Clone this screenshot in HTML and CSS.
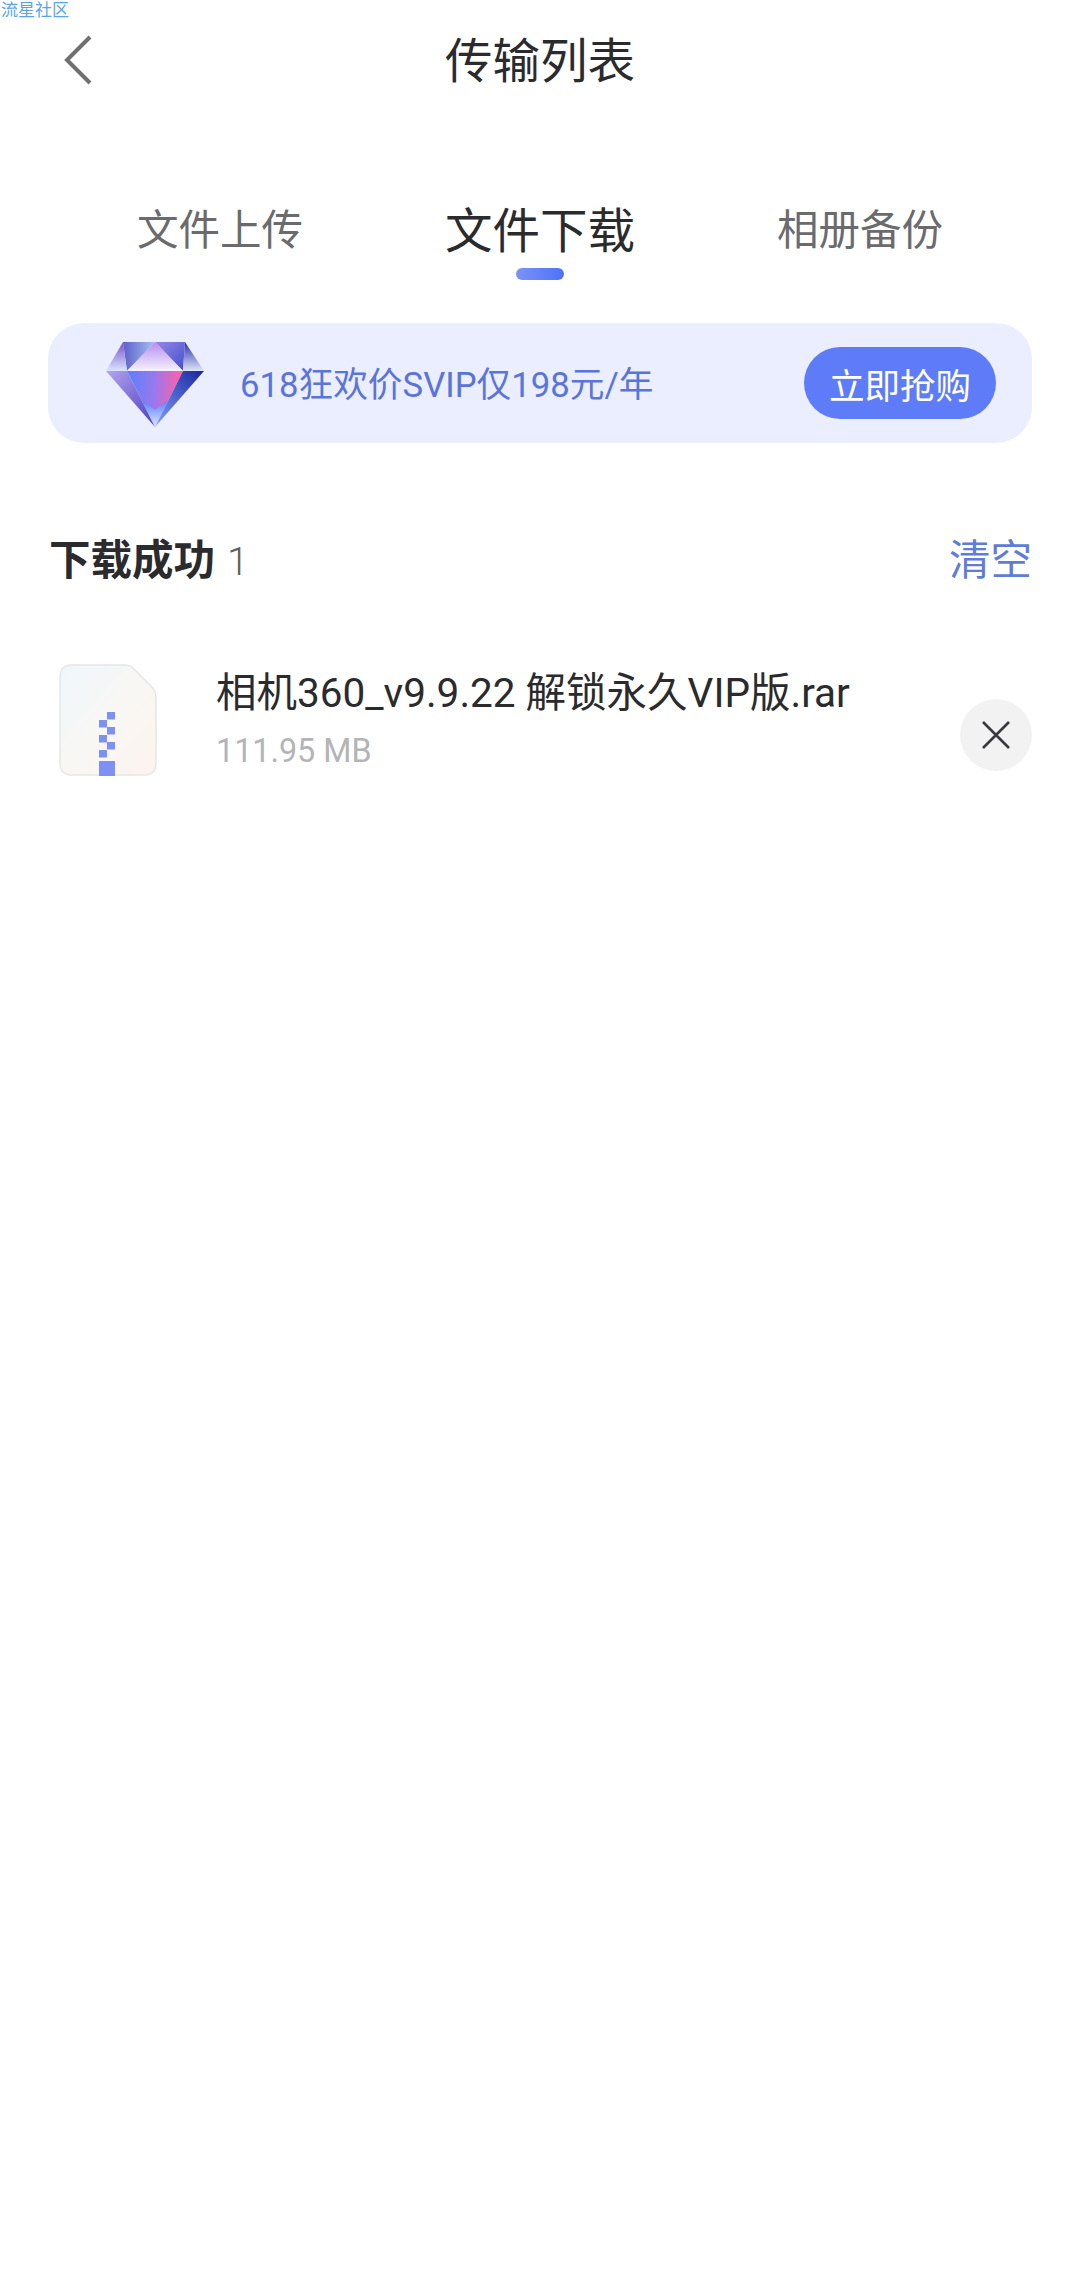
FILE: index.html
```html
<!DOCTYPE html>
<html lang="zh-CN">
<head>
    <meta charset="UTF-8">
    <title>传输列表</title>
    <link rel="stylesheet" href="styles.css">
</head>
<body>
    <div class="watermark">流星社区</div>
    <header class="topbar">
        <svg class="back" width="34" height="52" viewBox="0 0 34 52">
            <path d="M29 3 L6 26 L29 49" fill="none" stroke="#707070" stroke-width="4"/>
        </svg>
        <h1>传输列表</h1>
    </header>
    <nav class="tabs">
        <div class="tab">文件上传</div>
        <div class="tab active">文件下载</div>
        <div class="tab">相册备份</div>
    </nav>
    <div class="indicator-row"><span class="indicator"></span></div>
    <section class="banner">
        <svg class="diamond" width="100" height="90" viewBox="0 0 100 90">
            <defs>
                <linearGradient id="gPink" x1="0" y1="0.2" x2="1" y2="0.25">
                    <stop offset="0" stop-color="#5a80fb"/>
                    <stop offset="0.5" stop-color="#9a78ee"/>
                    <stop offset="0.95" stop-color="#ff5fa8"/>
                </linearGradient>
                <linearGradient id="gTop" x1="0" y1="0" x2="0" y2="1">
                    <stop offset="0" stop-color="#b58cf0"/>
                    <stop offset="1" stop-color="#f6f2fd"/>
                </linearGradient>
                <linearGradient id="gLeft" x1="0" y1="0" x2="1" y2="1">
                    <stop offset="0" stop-color="#b4a4ee"/>
                    <stop offset="1" stop-color="#4a3cc0"/>
                </linearGradient>
                <linearGradient id="gRight" x1="1" y1="0" x2="0" y2="1">
                    <stop offset="0" stop-color="#18249e"/>
                    <stop offset="1" stop-color="#7fa0f8"/>
                </linearGradient>
                <linearGradient id="gTip" x1="0" y1="0" x2="0" y2="1">
                    <stop offset="0" stop-color="#5a80fb"/>
                    <stop offset="1" stop-color="#e0ebff"/>
                </linearGradient>
                <linearGradient id="gSideL" x1="0" y1="0" x2="0" y2="1">
                    <stop offset="0" stop-color="#7a4fd0"/>
                    <stop offset="1" stop-color="#d8e6fb"/>
                </linearGradient>
                <linearGradient id="gSideR" x1="0" y1="0" x2="0" y2="1">
                    <stop offset="0" stop-color="#2a2fa8"/>
                    <stop offset="1" stop-color="#dfe6fa"/>
                </linearGradient>
                <linearGradient id="gUpL" x1="0" y1="0" x2="1" y2="0">
                    <stop offset="0" stop-color="#5c62c8"/>
                    <stop offset="1" stop-color="#a9c0f4"/>
                </linearGradient>
                <linearGradient id="gUpR" x1="0" y1="0" x2="1" y2="1">
                    <stop offset="0" stop-color="#9a86e4"/>
                    <stop offset="1" stop-color="#3f4fd0"/>
                </linearGradient>
            </defs>
            <path d="M18 4 L50 4 L22 33 Z" fill="url(#gUpL)"/>
            <path d="M18 4 L22 33 L1 33 Z" fill="url(#gSideL)"/>
            <path d="M50 4 L80 4 L78 33 Z" fill="url(#gUpR)"/>
            <path d="M80 4 L99 33 L78 33 Z" fill="url(#gSideR)"/>
            <path d="M50 4 L78 33 L22 33 Z" fill="url(#gTop)"/>
            <path d="M1 33 L22 33 L50 89 Z" fill="url(#gLeft)"/>
            <path d="M22 33 L78 33 L50 89 Z" fill="url(#gPink)"/>
            <path d="M78 33 L99 33 L50 89 Z" fill="url(#gRight)"/>
            <path d="M37 63 L50 89 L63 63 L50 72 Z" fill="url(#gTip)"/>
        </svg>
        <div class="banner-text">618狂欢价SVIP仅198元/年</div>
        <div class="buy">立即抢购</div>
    </section>
    <div class="list-head">
        <div><span class="list-title">下载成功</span><span class="list-count">1</span></div>
        <div class="clear">清空</div>
    </div>
    <div class="file-row">
        <svg class="file-icon" width="98" height="112" viewBox="0 0 98 112">
            <defs>
                <linearGradient id="gFile" x1="0" y1="0" x2="1" y2="1">
                    <stop offset="0" stop-color="#eff7fc"/>
                    <stop offset="0.55" stop-color="#f9f7f3"/>
                    <stop offset="1" stop-color="#fcf3ef"/>
                </linearGradient>
            </defs>
            <path d="M13 1 H66 Q71 1 75 5 L92 22 Q97 27 97 33 V99 Q97 111 85 111 H13 Q1 111 1 99 V13 Q1 1 13 1 Z" fill="url(#gFile)" stroke="#e8e6e6" stroke-width="1.5"/>
            <g fill="#7d90f4">
                <rect x="48" y="48" width="8" height="7.5"/>
                <rect x="40" y="56" width="8" height="7.5"/>
                <rect x="48" y="63" width="8" height="7.5"/>
                <rect x="40" y="71" width="8" height="7.5"/>
                <rect x="48" y="78" width="8" height="7.5"/>
                <rect x="40" y="86" width="8" height="7.5"/>
                <rect x="40" y="97" width="16" height="15"/>
            </g>
        </svg>
        <div class="file-info">
            <div class="file-name">相机360_v9.9.22 解锁永久VIP版.rar</div>
            <div class="file-size">111.95 MB</div>
        </div>
        <div class="close">
            <svg width="30" height="30" viewBox="0 0 30 30">
                <path d="M2 2 L28 28 M28 2 L2 28" stroke="#3a3a3e" stroke-width="2.6" fill="none"/>
            </svg>
        </div>
    </div>
</body>
</html>
```

FILE: styles.css
```css
* {
    box-sizing: border-box;
}

body {
    margin: 0;
    width: 1080px;
    height: 2273px;
    overflow: hidden;
    background: #fff;
    font-family: "Noto Sans CJK SC", "Noto Sans", sans-serif;
    position: relative;
}

.watermark {
    position: absolute;
    left: 1px;
    top: 0;
    font-size: 17px;
    line-height: 18px;
    color: #5aa5ea;
}

.topbar {
    height: 120px;
    padding-bottom: 5px;
    position: relative;
    display: flex;
    align-items: center;
    justify-content: center;
}

.back {
    position: absolute;
    left: 61px;
    top: 34px;
}

h1 {
    margin: 0;
    font-size: 47.5px;
    font-weight: 400;
    color: #2b2b2e;
}

.tabs {
    margin-top: 72px;
    display: grid;
    grid-template-columns: repeat(3, 320px);
    align-items: center;
    justify-items: center;
    height: 70px;
    padding: 0 60px;
}

.tab {
    font-size: 41.5px;
    color: #6b6b6e;
}

.tab.active {
    font-size: 47.5px;
    color: #2b2b2e;
}

.indicator-row {
    display: flex;
    justify-content: center;
    margin-top: 6px;
}

.indicator {
    width: 48px;
    height: 12px;
    border-radius: 6px;
    background: linear-gradient(to right, #7b93f6, #4f72f8);
}

.banner {
    margin: 43px 48px 0;
    height: 120px;
    border-radius: 36px;
    background: #eaeefe;
    display: flex;
    align-items: center;
    padding: 0 36px 0 57px;
}

.banner-text {
    margin-left: 35px;
    margin-bottom: 2px;
    flex: 1;
    font-family: Roboto, "Noto Sans CJK SC", sans-serif;
    font-size: 34.7px;
    color: #5b74d8;
}

.buy {
    width: 192px;
    height: 72px;
    border-radius: 36px;
    background: #5f7cf8;
    color: #fff;
    font-size: 35.5px;
    display: flex;
    align-items: center;
    justify-content: center;
}

.list-head {
    margin-top: 84px;
    padding: 0 48px 0 49px;
    display: flex;
    align-items: center;
    justify-content: space-between;
    height: 60px;
}

.list-title {
    font-size: 41.5px;
    font-weight: 700;
    color: #2b2b2e;
}

.list-count {
    margin-left: 12px;
    font-family: Roboto, sans-serif;
    font-weight: 300;
    font-size: 39px;
    color: #5f5f62;
}

.clear {
    font-size: 41.5px;
    color: #5f7cd8;
}

.file-row {
    margin-top: 77px;
    padding: 0 48px 0 59px;
    display: flex;
    align-items: flex-start;
    height: 112px;
}

.file-icon {
    flex: none;
}

.file-info {
    margin-left: 59px;
    flex: 1;
    margin-top: 0;
    font-family: Roboto, "Noto Sans CJK SC", sans-serif;
}

.file-name {
    font-size: 40.5px;
    line-height: 58px;
    color: #2b2b2e;
}

.file-size {
    font-size: 32.3px;
    line-height: 46px;
    margin-top: 6px;
    color: #b4b4b7;
}

.close {
    flex: none;
    width: 72px;
    height: 72px;
    margin-top: 35px;
    border-radius: 50%;
    background: #f2f2f3;
    display: flex;
    align-items: center;
    justify-content: center;
}
```
